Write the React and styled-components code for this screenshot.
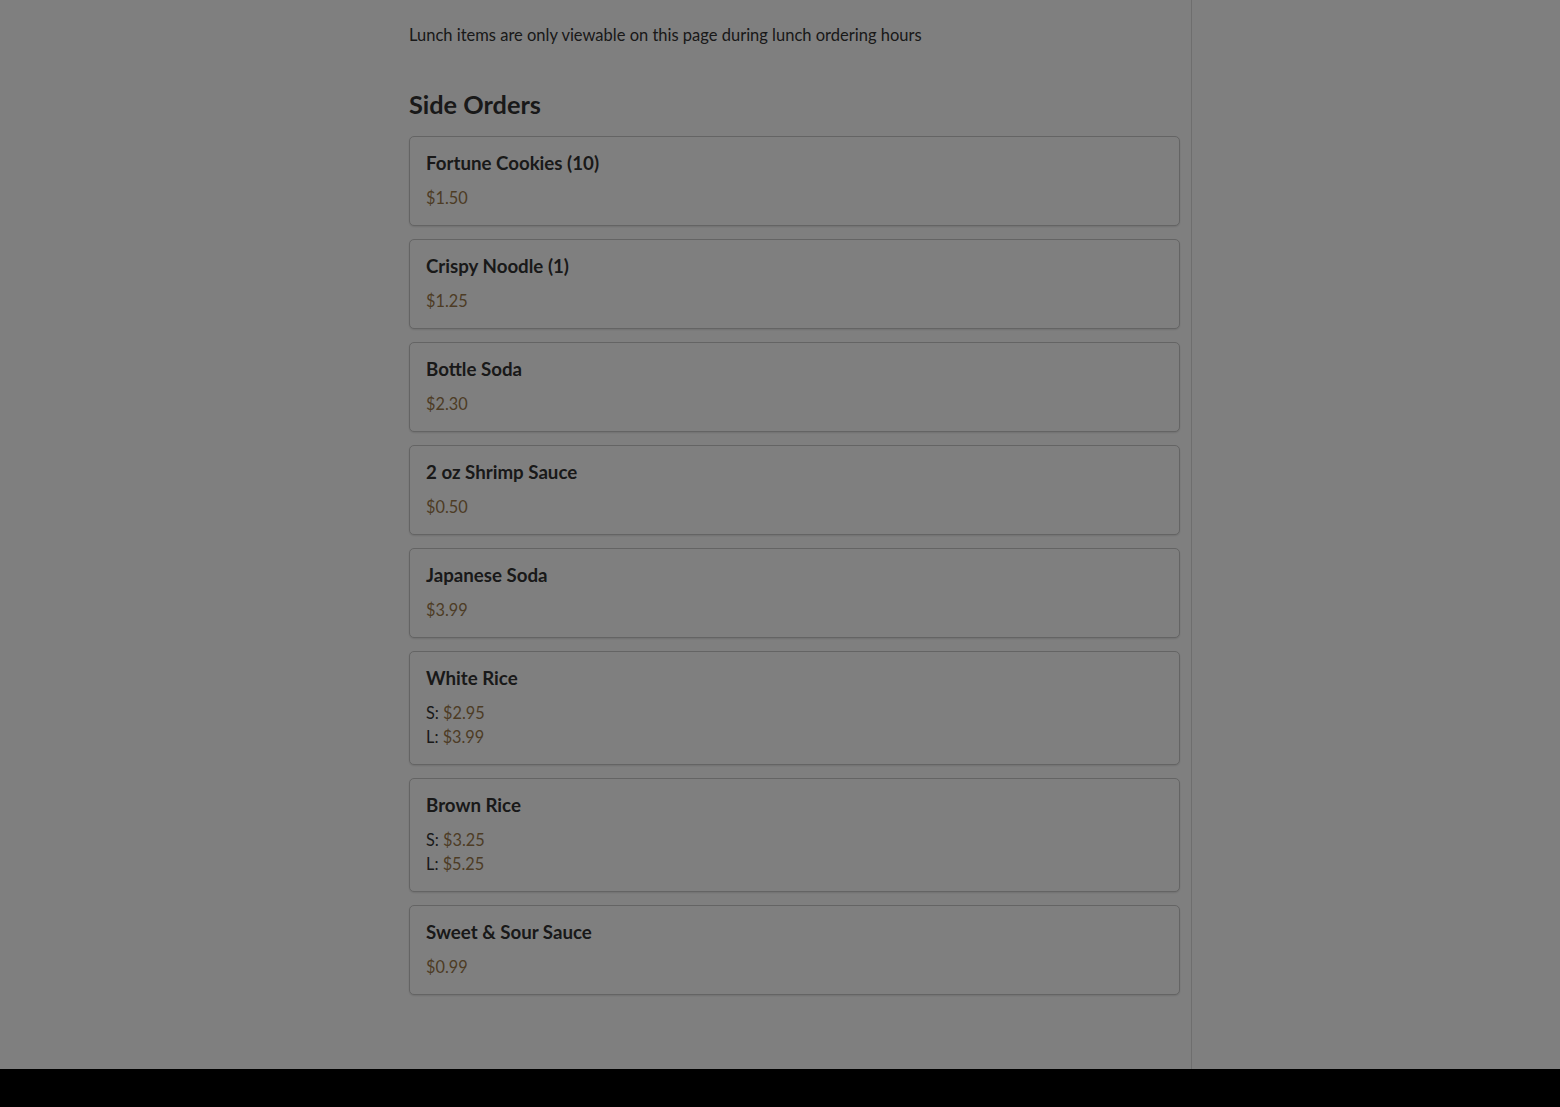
import React from "react";
import styled, { createGlobalStyle } from "styled-components";

const items = [
  { name: "Fortune Cookies (10)", prices: [{ price: "$1.50" }] },
  { name: "Crispy Noodle (1)", prices: [{ price: "$1.25" }] },
  { name: "Bottle Soda", prices: [{ price: "$2.30" }] },
  { name: "2 oz Shrimp Sauce", prices: [{ price: "$0.50" }] },
  { name: "Japanese Soda", prices: [{ price: "$3.99" }] },
  {
    name: "White Rice",
    prices: [
      { size: "S", price: "$2.95" },
      { size: "L", price: "$3.99" },
    ],
  },
  {
    name: "Brown Rice",
    prices: [
      { size: "S", price: "$3.25" },
      { size: "L", price: "$5.25" },
    ],
  },
  { name: "Sweet & Sour Sauce", prices: [{ price: "$0.99" }] },
];

const App = () => {
  return (
    <>
      <GlobalStyle />
      <Page>
        <Layout>
          <Gutter />
          <MenuColumn>
            <Notice>Lunch items are only viewable on this page during lunch ordering hours</Notice>
            <SectionTitle>Side Orders</SectionTitle>
            <ItemList>
              {items.map((item) => (
                <ItemCard key={item.name}>
                  <ItemName>{item.name}</ItemName>
                  <PriceList>
                    {item.prices.map((p) => (
                      <PriceRow key={p.price + (p.size || "")}>
                        {p.size && <SizeLabel>{p.size}: </SizeLabel>}
                        <Price>{p.price}</Price>
                      </PriceRow>
                    ))}
                  </PriceList>
                </ItemCard>
              ))}
            </ItemList>
          </MenuColumn>
          <CartColumn />
        </Layout>
        <Footer />
      </Page>
      <Dimmer />
    </>
  );
};

const GlobalStyle = createGlobalStyle`
  * { box-sizing: border-box; }
  html, body {
    margin: 0;
    padding: 0;
    background: #ffffff;
    font-family: "Lato", "Noto Sans", sans-serif;
    color: #333333;
  }
`;

const Page = styled.div`
  display: flex;
  flex-direction: column;
  min-height: 100vh;
`;

const Layout = styled.div`
  flex: 1;
  display: grid;
  grid-template-columns: 397px 795px 1fr;
`;

const Gutter = styled.div``;

const MenuColumn = styled.main`
  border-right: 1px solid #dcdcdc;
  padding: 25px 11px 60px 12px;
`;

const CartColumn = styled.aside``;

const Notice = styled.p`
  margin: 0;
  font-size: 16.5px;
  line-height: 20px;
  color: #333333;
`;

const SectionTitle = styled.h2`
  margin: 43px 0 16px;
  font-size: 25.3px;
  line-height: 32px;
  font-weight: 700;
  color: #333333;
`;

const ItemList = styled.div`
  display: flex;
  flex-direction: column;
  gap: 13px;
`;

const ItemCard = styled.div`
  border: 1px solid #c8c8c8;
  border-radius: 5px;
  padding: 14px 16px 15px;
  box-shadow: 0 1px 2px rgba(0, 0, 0, 0.12);
  background: #ffffff;
`;

const ItemName = styled.h3`
  margin: 0 0 11px;
  font-size: 18.7px;
  line-height: 24px;
  font-weight: 700;
  color: #333333;
`;

const PriceList = styled.div`
  display: flex;
  flex-direction: column;
`;

const PriceRow = styled.div`
  font-size: 16.3px;
  line-height: 24px;
`;

const SizeLabel = styled.span`
  color: #333333;
`;

const Price = styled.span`
  color: #9a784a;
`;

const Footer = styled.footer`
  height: 38px;
  background: #000000;
`;

const Dimmer = styled.div`
  position: fixed;
  inset: 0;
  background: rgba(0, 0, 0, 0.5);
`;

export default App;
